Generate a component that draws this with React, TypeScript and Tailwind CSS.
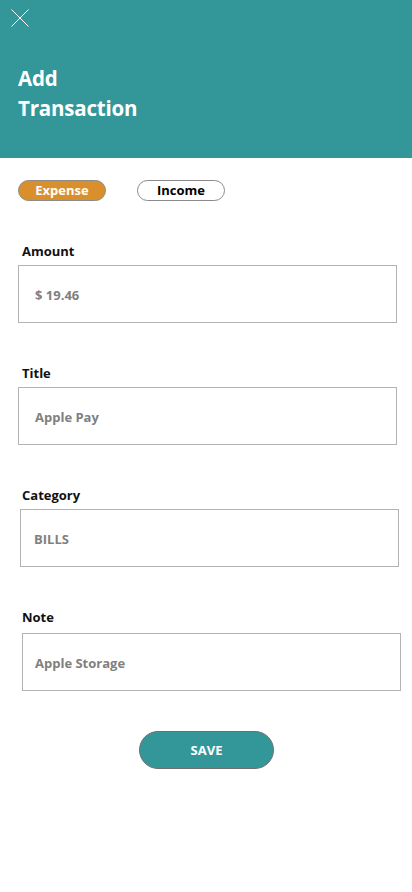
import { useState } from 'react';

interface Field {
    label: string;
    value: string;
    box: string;
}

const fields: Field[] = [
    { label: 'Amount', value: '$ 19.46', box: 'ml-[18px] mr-[15px] pl-4' },
    { label: 'Title', value: 'Apple Pay', box: 'ml-[18px] mr-[15px] pl-4' },
    { label: 'Category', value: 'BILLS', box: 'ml-[20px] mr-[13px] pl-[13px]' },
    { label: 'Note', value: 'Apple Storage', box: 'ml-[22px] mr-[11px] pl-[12px]' },
];

export default function App() {
    const [type, setType] = useState<'expense' | 'income'>('expense');

    return (
        <div className="min-h-[892px] w-[412px] bg-white font-['Open_Sans',sans-serif]">
            <div className="h-[158px] bg-[#33979a] pl-[18px] pt-[9px]">
                <button type="button" className="-ml-[7px] block h-[18px] w-[18px]">
                    <svg viewBox="0 0 18 18" className="h-[18px] w-[18px]" fill="none" stroke="white" strokeWidth="1">
                        <path d="M0.5 0.5 L17.5 17.5 M17.5 0.5 L0.5 17.5" />
                    </svg>
                </button>
                <h1 className="mt-[36px] text-[20.5px] leading-[30px] font-bold tracking-[-0.2px] text-white">
                    Add
                    <br />
                    Transaction
                </h1>
            </div>

            <div className="mt-[22px] flex gap-[31px] pl-[18px]">
                <button
                    type="button"
                    onClick={() => setType('expense')}
                    className={
                        type === 'expense'
                            ? 'h-[21px] w-[88px] rounded-full border border-[#8a8a8a] bg-[#d9902c] text-[13px] leading-none font-bold text-white'
                            : 'h-[21px] w-[88px] rounded-full border border-[#8a8a8a] bg-white text-[13px] leading-none font-bold text-black'
                    }
                >
                    Expense
                </button>
                <button
                    type="button"
                    onClick={() => setType('income')}
                    className={
                        type === 'income'
                            ? 'h-[21px] w-[88px] rounded-full border border-[#8a8a8a] bg-[#d9902c] text-[13px] leading-none font-bold text-white'
                            : 'h-[21px] w-[88px] rounded-full border border-[#8a8a8a] bg-white text-[13px] leading-none font-bold text-black'
                    }
                >
                    Income
                </button>
            </div>

            <div className="mt-[42px]">
                {fields.map((f, i) => (
                    <div key={f.label} className={i === 0 ? '' : 'mt-[42px]'}>
                        <label className="block pl-[22px] text-[13px] leading-[16px] font-bold text-[#111]">{f.label}</label>
                        <div
                            className={`${f.box} ${i === 3 ? 'mt-[8px]' : 'mt-[6px]'} flex h-[58px] items-center border border-[#b3b3b3] pt-[3px] text-[13px] font-bold text-[#808080]`}
                        >
                            {f.value}
                        </div>
                    </div>
                ))}
            </div>

            <div className="mt-[40px] flex justify-center">
                <button
                    type="button"
                    className="ml-[1px] h-[38px] w-[135px] rounded-full border border-[#6f6f6f] bg-[#33979a] pt-[1px] text-[13px] font-bold text-white"
                >
                    SAVE
                </button>
            </div>
        </div>
    );
}
